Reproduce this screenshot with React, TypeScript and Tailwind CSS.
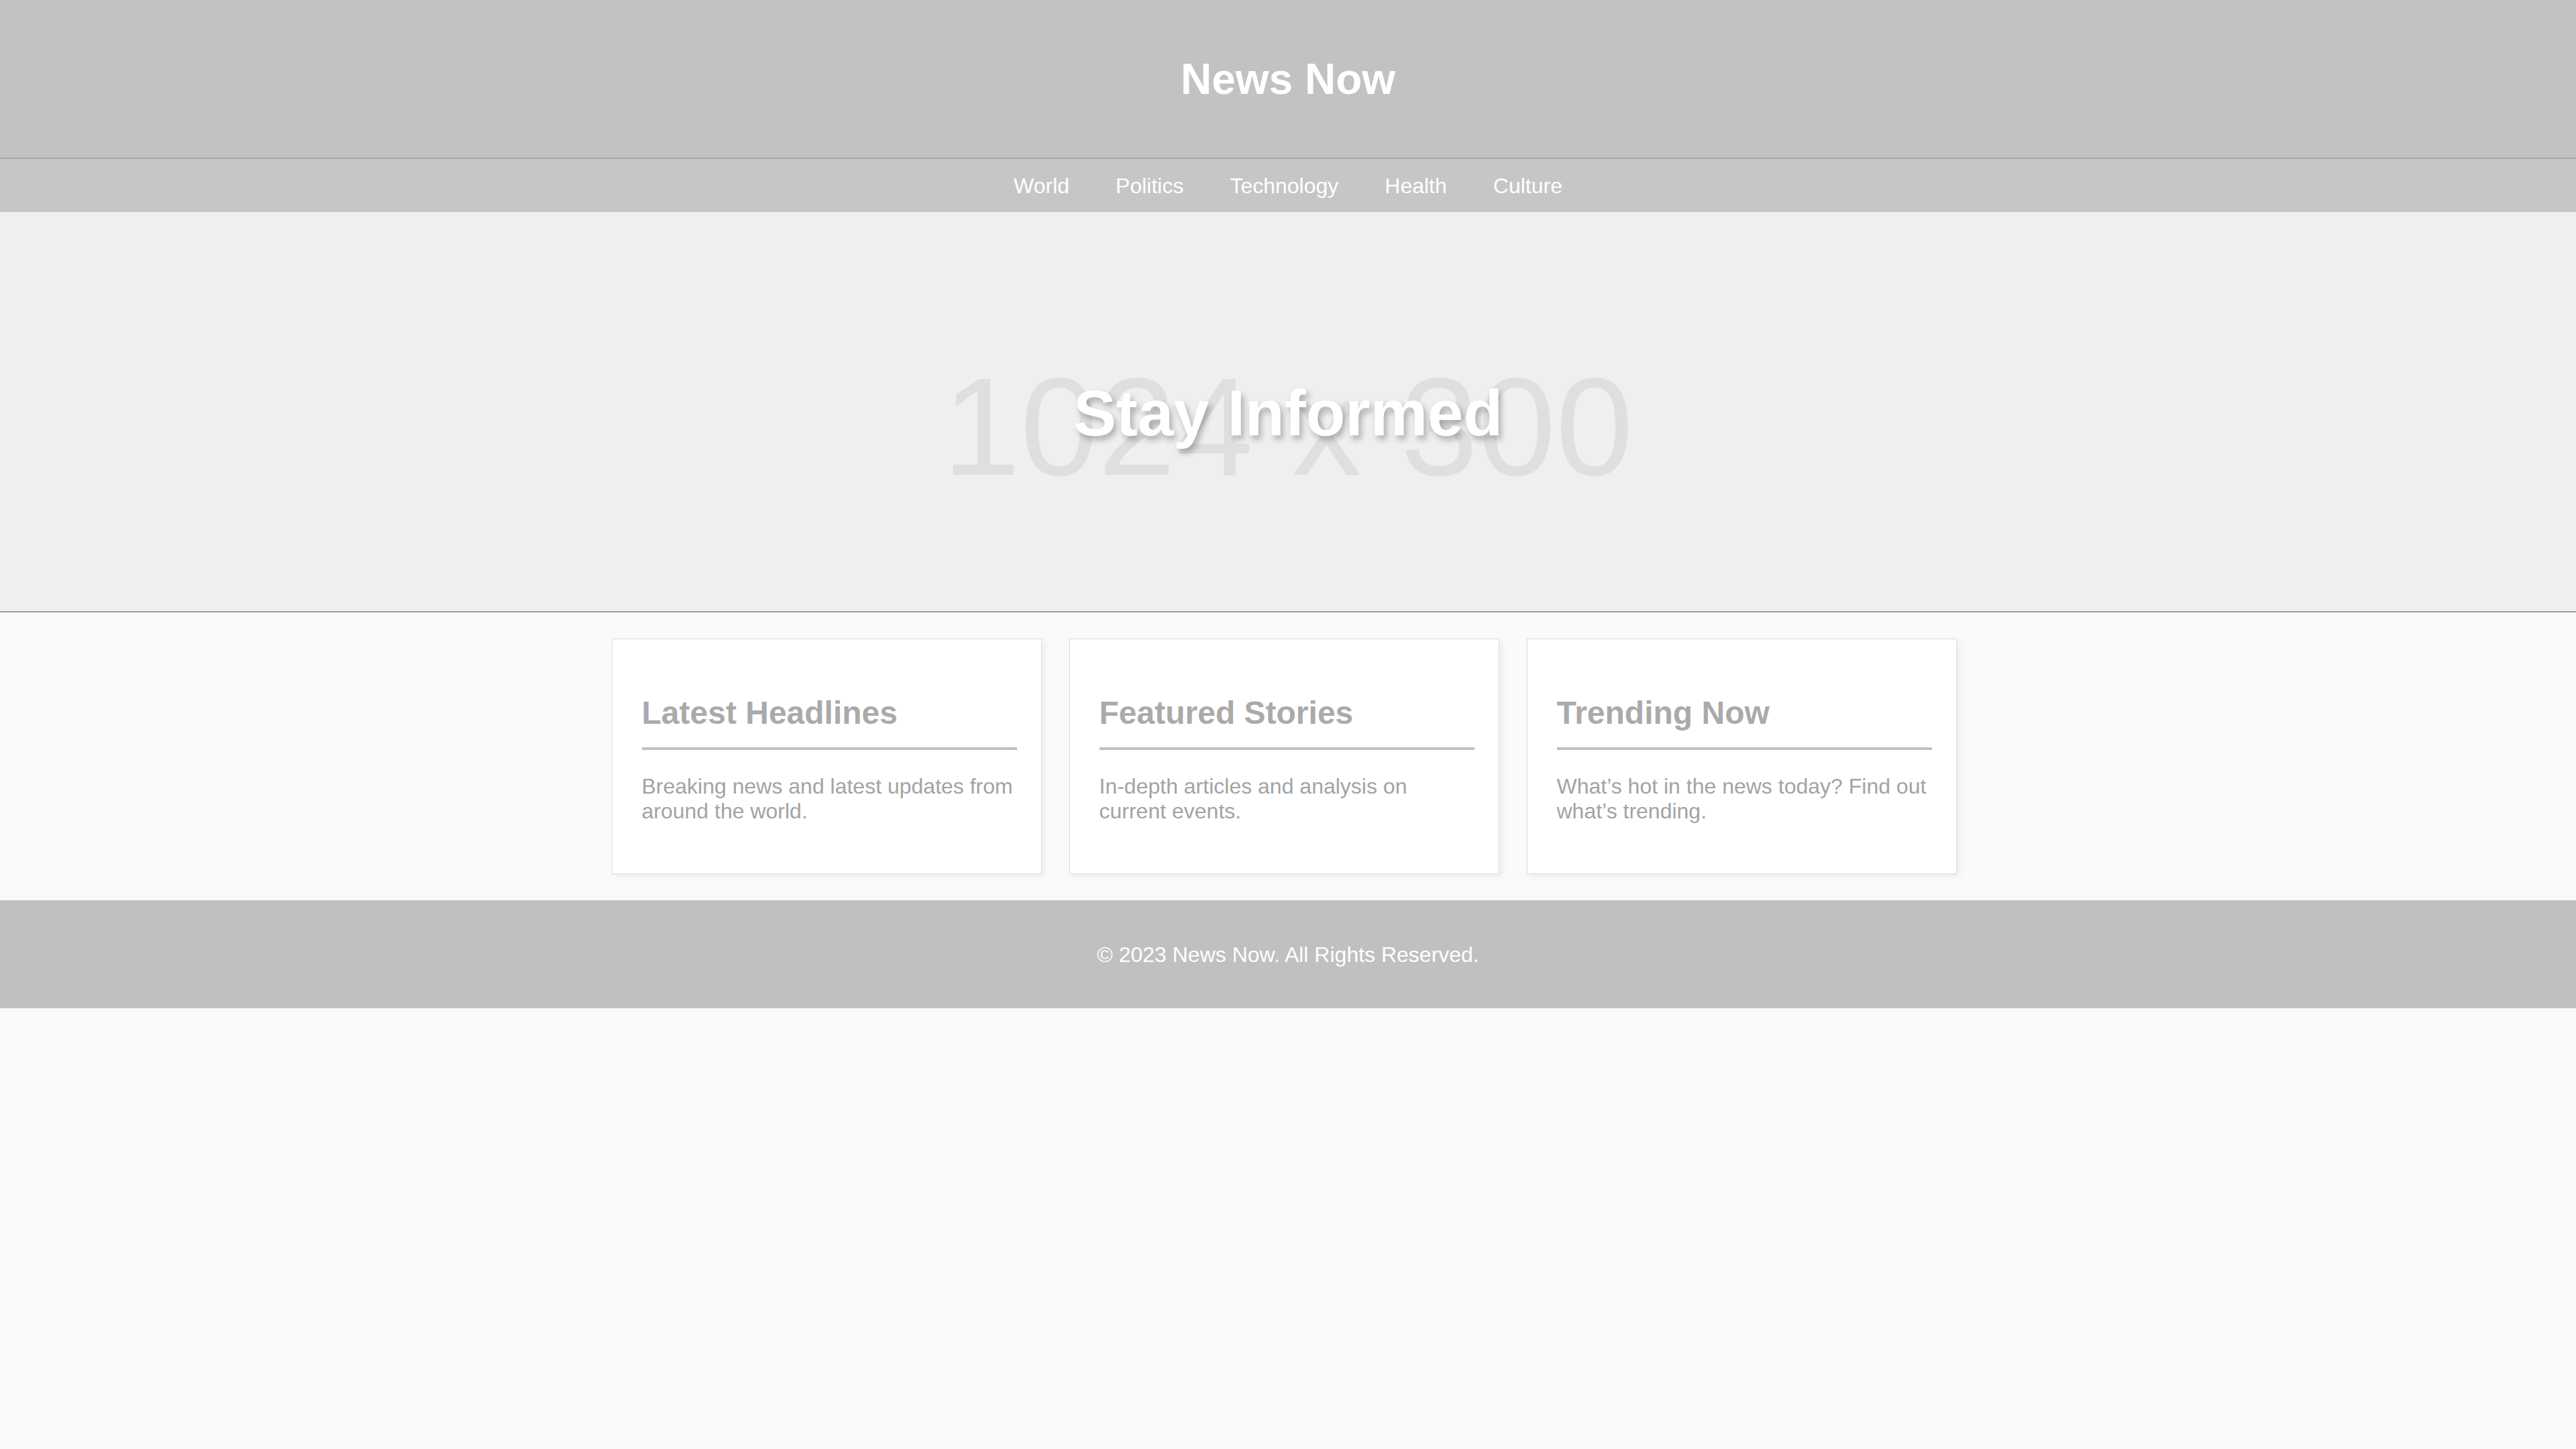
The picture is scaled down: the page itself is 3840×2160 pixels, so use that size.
const sections = [
  {
    title: "Latest Headlines",
    body: "Breaking news and latest updates from around the world.",
  },
  {
    title: "Featured Stories",
    body: "In-depth articles and analysis on current events.",
  },
  {
    title: "Trending Now",
    body: "What\u2019s hot in the news today? Find out what\u2019s trending.",
  },
];

const links = ["World", "Politics", "Technology", "Health", "Culture"];

function Card({ title, body }: { title: string; body: string }) {
  return (
    <div className="flex w-[641px] flex-col border border-[#dcdcdc] bg-white pt-[82px] pb-[74px] pl-[44px] pr-[36px] shadow-[4px_4px_10px_rgba(0,0,0,0.06)]">
      <h2 className="border-b-4 border-[#c0c0c0] pb-[24px] text-[48px] font-bold leading-[55px] text-[#aaaaaa]">
        {title}
      </h2>
      <p className="mt-[36px] text-[32px] leading-[37px] text-[#a3a3a3]">{body}</p>
    </div>
  );
}

export default function App() {
  return (
    <div className="min-h-[2160px] bg-[#fafafa] font-['Liberation_Sans',Arial,sans-serif]">
      <header className="flex h-[235px] items-center justify-center bg-[#c2c2c2]">
        <h1 className="text-[64px] font-bold text-white">News Now</h1>
      </header>
      <nav className="flex h-[81px] items-center justify-center gap-[69px] border-t-[2px] border-[#a8a8a8] bg-[#c6c6c6]">
        {links.map((l) => (
          <a key={l} className="text-[32px] text-white">
            {l}
          </a>
        ))}
      </nav>
      <section className="grid h-[597px] place-items-center border-b-[2px] border-[#9c9c9c] bg-[#efefef]">
        <span className="col-start-1 row-start-1 mt-[44px] text-[208px] leading-none text-[#dfdfdf]">
          1024 x 300
        </span>
        <h2 className="col-start-1 row-start-1 mt-[4px] text-[96px] font-bold text-white [text-shadow:4px_6px_10px_rgba(0,0,0,0.28)]">
          Stay Informed
        </h2>
      </section>
      <main className="flex justify-center gap-[41px] pt-[39px] pb-[39px] pr-[12px]">
        {sections.map((s) => (
          <Card key={s.title} title={s.title} body={s.body} />
        ))}
      </main>
      <footer className="flex h-[161px] items-center justify-center bg-[#c0c0c0]">
        <p className="text-[32px] text-white">© 2023 News Now. All Rights Reserved.</p>
      </footer>
    </div>
  );
}
